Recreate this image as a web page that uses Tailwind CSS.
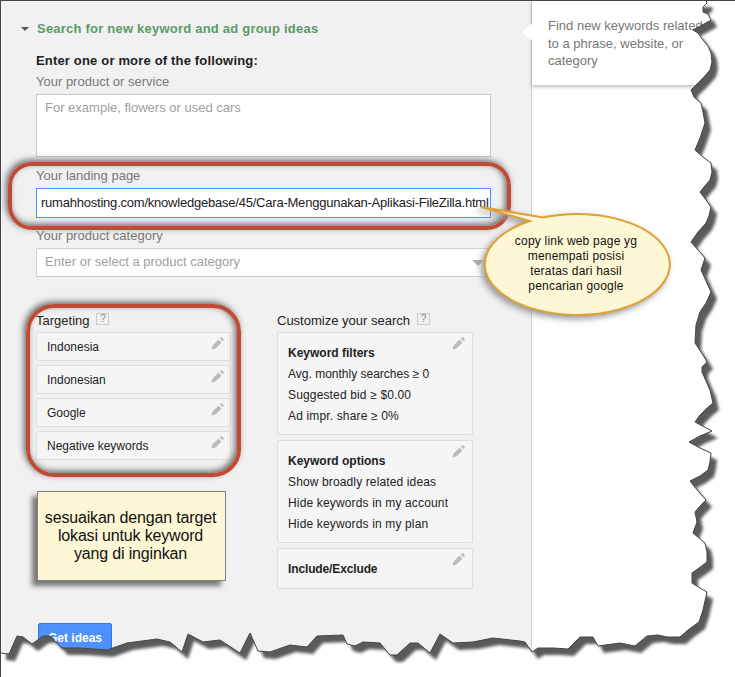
<!DOCTYPE html>
<html lang="en">
  <head>
    <meta charset="UTF-8" />
    <title>Search for new keyword and ad group ideas</title>
    <script src="https://cdn.jsdelivr.net/npm/@tailwindcss/browser@4"></script>
  </head>
  <body class="bg-white">
    <div class="relative w-[735px] h-[677px] overflow-hidden flex border-t border-l border-[#444444] font-['Liberation_Sans',Arial,sans-serif] text-[13px] leading-[16px]">
      <!-- Left panel -->
      <div class="w-[531px] h-[676px] shrink-0 bg-[#f1f1f1] border-r border-[#cccccc] pt-[20px] pl-[35px]">
        <div class="flex items-center h-[16px] -ml-[15px]">
          <span class="w-0 h-0 border-x-[4px] border-x-transparent border-t-[4px] border-t-[#555555]"></span>
          <h2 class="ml-[8px] font-bold text-[#5a9a68] tracking-[0.22px]">Search for new keyword and ad group ideas</h2>
        </div>
        <p class="mt-[16px] font-bold text-[#222222] tracking-[0.17px]">Enter one or more of the following:</p>
        <p class="mt-[5px] text-[#777777]">Your product or service</p>
        <div class="mt-[4px] w-[455px] h-[63px] bg-white border border-[#c8c8c8] pl-[8px] pt-[5px] text-[#a0a0a0]">For example, flowers or used cars</div>
        <p class="mt-[11px] text-[#777777]">Your landing page</p>
        <div class="mt-[4px] w-[455px] h-[30px] bg-white border border-[#4d90fe] pl-[4px] flex items-center text-[#222222] tracking-[-0.22px] whitespace-nowrap">rumahhosting.com/knowledgebase/45/Cara-Menggunakan-Aplikasi-FileZilla.html</div>
        <p class="mt-[10px] text-[#777777]">Your product category</p>
        <div class="relative mt-[4px] w-[455px] h-[29px] bg-white border border-[#d0d0d0] pl-[8px] pb-[2px] flex items-center text-[#a0a0a0]">
          Enter or select a product category
          <span class="absolute right-[6px] top-[11px] w-0 h-0 border-x-[6px] border-x-transparent border-t-[6px] border-t-[#aaaaaa]"></span>
        </div>

        <div class="flex mt-[35px]">
          <!-- Targeting -->
          <div class="w-[195px]">
            <div class="flex items-start h-[20px] pt-[1px] text-[#222222]">
              Targeting
              <span class="ml-[7px] w-[13px] h-[12px] border border-[#cccccc] text-[#888888] text-[10px] leading-[10px] text-center">?</span>
            </div>
            <div class="flex flex-col gap-[4px] text-[12px] text-[#222222]">
              <div class="relative h-[29px] bg-[#f5f5f5] border border-[#dddddd] rounded-[2px] pl-[10px] flex items-center">
                Indonesia
                <svg class="absolute right-[6px] top-[4px]" width="13" height="13" viewBox="0 0 13 13"><path d="M0.5 12.5 L1.5 8.5 L7.5 2.5 L10.5 5.5 L4.5 11.5 Z M8.7 1.3 L9.8 0.4 Q10.5 0 11.2 0.5 L12.5 1.8 Q13 2.5 12.6 3.2 L11.7 4.3 Z" fill="#bbbbbb"/></svg>
              </div>
              <div class="relative h-[29px] bg-[#f5f5f5] border border-[#dddddd] rounded-[2px] pl-[10px] flex items-center">
                Indonesian
                <svg class="absolute right-[6px] top-[4px]" width="13" height="13" viewBox="0 0 13 13"><path d="M0.5 12.5 L1.5 8.5 L7.5 2.5 L10.5 5.5 L4.5 11.5 Z M8.7 1.3 L9.8 0.4 Q10.5 0 11.2 0.5 L12.5 1.8 Q13 2.5 12.6 3.2 L11.7 4.3 Z" fill="#bbbbbb"/></svg>
              </div>
              <div class="relative h-[29px] bg-[#f5f5f5] border border-[#dddddd] rounded-[2px] pl-[10px] flex items-center">
                Google
                <svg class="absolute right-[6px] top-[4px]" width="13" height="13" viewBox="0 0 13 13"><path d="M0.5 12.5 L1.5 8.5 L7.5 2.5 L10.5 5.5 L4.5 11.5 Z M8.7 1.3 L9.8 0.4 Q10.5 0 11.2 0.5 L12.5 1.8 Q13 2.5 12.6 3.2 L11.7 4.3 Z" fill="#bbbbbb"/></svg>
              </div>
              <div class="relative h-[29px] bg-[#f5f5f5] border border-[#dddddd] rounded-[2px] pl-[10px] flex items-center">
                Negative keywords
                <svg class="absolute right-[6px] top-[4px]" width="13" height="13" viewBox="0 0 13 13"><path d="M0.5 12.5 L1.5 8.5 L7.5 2.5 L10.5 5.5 L4.5 11.5 Z M8.7 1.3 L9.8 0.4 Q10.5 0 11.2 0.5 L12.5 1.8 Q13 2.5 12.6 3.2 L11.7 4.3 Z" fill="#bbbbbb"/></svg>
              </div>
            </div>
            <div class="mt-[31px] ml-[1px] w-[189px] h-[90px] bg-[#fef7d6] border border-[#808080] shadow-[-5px_5px_5px_#777777] flex items-center justify-center pr-[2px] text-center text-[16px] leading-[18px] tracking-[-0.17px] text-[#111111]">
              <p>sesuaikan dengan target<br />lokasi untuk keyword<br />yang di inginkan</p>
            </div>
          </div>

          <!-- Customize your search -->
          <div class="ml-[46px] w-[196px]">
            <div class="flex items-start h-[20px] pt-[1px] text-[#222222]">
              Customize your search
              <span class="ml-[7px] w-[13px] h-[12px] border border-[#cccccc] text-[#888888] text-[10px] leading-[10px] text-center">?</span>
            </div>
            <div class="flex flex-col gap-[5px] text-[12px] leading-[21px] text-[#222222]">
              <div class="relative h-[103px] bg-[#f5f5f5] border border-[#dddddd] rounded-[2px] pl-[10px] pt-[10px]">
                <p class="font-bold">Keyword filters</p>
                <p>Avg. monthly searches ≥ 0</p>
                <p class="tracking-[0.15px]">Suggested bid ≥ $0.00</p>
                <p class="tracking-[0.15px]">Ad impr. share ≥ 0%</p>
                <svg class="absolute right-[7px] top-[4px]" width="13" height="13" viewBox="0 0 13 13"><path d="M0.5 12.5 L1.5 8.5 L7.5 2.5 L10.5 5.5 L4.5 11.5 Z M8.7 1.3 L9.8 0.4 Q10.5 0 11.2 0.5 L12.5 1.8 Q13 2.5 12.6 3.2 L11.7 4.3 Z" fill="#bbbbbb"/></svg>
              </div>
              <div class="relative h-[103px] bg-[#f5f5f5] border border-[#dddddd] rounded-[2px] pl-[10px] pt-[10px]">
                <p class="font-bold">Keyword options</p>
                <p class="tracking-[0.13px]">Show broadly related ideas</p>
                <p class="tracking-[0.15px]">Hide keywords in my account</p>
                <p class="tracking-[0.15px]">Hide keywords in my plan</p>
                <svg class="absolute right-[7px] top-[4px]" width="13" height="13" viewBox="0 0 13 13"><path d="M0.5 12.5 L1.5 8.5 L7.5 2.5 L10.5 5.5 L4.5 11.5 Z M8.7 1.3 L9.8 0.4 Q10.5 0 11.2 0.5 L12.5 1.8 Q13 2.5 12.6 3.2 L11.7 4.3 Z" fill="#bbbbbb"/></svg>
              </div>
              <div class="relative h-[41px] bg-[#f5f5f5] border border-[#dddddd] rounded-[2px] pl-[10px] pt-[10px]">
                <p class="font-bold tracking-[-0.13px]">Include/Exclude</p>
                <svg class="absolute right-[7px] top-[4px]" width="13" height="13" viewBox="0 0 13 13"><path d="M0.5 12.5 L1.5 8.5 L7.5 2.5 L10.5 5.5 L4.5 11.5 Z M8.7 1.3 L9.8 0.4 Q10.5 0 11.2 0.5 L12.5 1.8 Q13 2.5 12.6 3.2 L11.7 4.3 Z" fill="#bbbbbb"/></svg>
              </div>
            </div>
          </div>
        </div>

        <button class="mt-[34px] ml-[2px] w-[74px] h-[29px] bg-[#4d90fe] border border-[#3079ed] rounded-[2px] text-white font-bold text-[12px]">Get ideas</button>
      </div>

      <!-- Right panel -->
      <div class="flex-1">
        <div class="relative h-[84px] bg-white shadow-[0_2px_4px_rgba(0,0,0,0.25)] pl-[16px] pt-[16px] leading-[17.5px] text-[#777777] whitespace-nowrap">
          <span class="absolute -left-[7px] top-[25px] w-[12px] h-[12px] bg-white rotate-45"></span>
          <p class="relative">Find new keywords related<br />to a phrase, website, or<br />category</p>
        </div>
      </div>

      <!-- Red highlight rings -->
      <div class="absolute left-[7px] top-[161px] w-[503px] h-[68px] rounded-[24px] border-4 border-[#c04a32] shadow-[-2px_-2px_6px_#666666,inset_-2px_-2px_6px_#666666]"></div>
      <div class="absolute left-[25px] top-[303px] w-[215px] h-[173px] rounded-[28px] border-4 border-[#c04a32] shadow-[-2px_-2px_6px_#666666,inset_-2px_-2px_6px_#666666]"></div>

      <!-- Torn paper edge and callout -->
      <svg class="absolute -left-px -top-px" width="735" height="677" viewBox="0 0 735 677">
        <defs>
          <filter id="blur" x="-5%" y="-5%" width="110%" height="110%"><feGaussianBlur stdDeviation="1.6" /></filter>
          <clipPath id="outside">
            <path d="M706 0 707 3 703 7 703 12 708 14 711 20 704 24 693 30 698 33 703 40 708 46 711 53 712 62 710 70 703 78 697 84 691 90 694 97 701 103 703 112 705 123 700 138 695 150 703 157 711 163 712 172 710 180 704 187 700 192 706 200 711 207 709 216 706 223 698 232 691 242 698 250 705 258 703 264 701 270 706 281 711 292 706 303 700 312 696 325 695 343 703 355 707 362 702 367 702 372 706 381 710 390 713 403 706 409 700 415 695 422 712 431 700 436 689 442 700 448 711 453 710 462 708 470 700 476 690 481 698 491 706 500 700 506 695 512 697 522 693 533 699 538 705 543 707 552 707 562 699 568 692 573 692 583 700 588 707 592 705 601 703 610 699 622 688 630 680 637 667 637 658 635 647 636 635 646 620 643 598 646 593 637 580 637 568 649 553 648 538 648 532 652 525 642 520 641 493 638 473 642 453 643 440 634 430 653 418 643 410 643 397 655 390 655 380 643 363 642 355 646 347 644 343 635 317 636 307 647 290 645 270 652 258 651 250 633 240 653 220 640 203 642 188 634 182 652 170 642 157 639 127 643 107 650 80 648 62 648 50 636 43 636 32 644 23 637 17 636 9 654 0 653 0 677 735 677 735 0Z" />
          </clipPath>
        </defs>
        <path fill="#ffffff" d="M706 0 707 3 703 7 703 12 708 14 711 20 704 24 693 30 698 33 703 40 708 46 711 53 712 62 710 70 703 78 697 84 691 90 694 97 701 103 703 112 705 123 700 138 695 150 703 157 711 163 712 172 710 180 704 187 700 192 706 200 711 207 709 216 706 223 698 232 691 242 698 250 705 258 703 264 701 270 706 281 711 292 706 303 700 312 696 325 695 343 703 355 707 362 702 367 702 372 706 381 710 390 713 403 706 409 700 415 695 422 712 431 700 436 689 442 700 448 711 453 710 462 708 470 700 476 690 481 698 491 706 500 700 506 695 512 697 522 693 533 699 538 705 543 707 552 707 562 699 568 692 573 692 583 700 588 707 592 705 601 703 610 699 622 688 630 680 637 667 637 658 635 647 636 635 646 620 643 598 646 593 637 580 637 568 649 553 648 538 648 532 652 525 642 520 641 493 638 473 642 453 643 440 634 430 653 418 643 410 643 397 655 390 655 380 643 363 642 355 646 347 644 343 635 317 636 307 647 290 645 270 652 258 651 250 633 240 653 220 640 203 642 188 634 182 652 170 642 157 639 127 643 107 650 80 648 62 648 50 636 43 636 32 644 23 637 17 636 9 654 0 653 0 677 735 677 735 0Z" />
        <g clip-path="url(#outside)">
          <path fill="#5a5a5a" filter="url(#blur)" transform="translate(6 7)" d="M0 0 706 0 707 3 703 7 703 12 708 14 711 20 704 24 693 30 698 33 703 40 708 46 711 53 712 62 710 70 703 78 697 84 691 90 694 97 701 103 703 112 705 123 700 138 695 150 703 157 711 163 712 172 710 180 704 187 700 192 706 200 711 207 709 216 706 223 698 232 691 242 698 250 705 258 703 264 701 270 706 281 711 292 706 303 700 312 696 325 695 343 703 355 707 362 702 367 702 372 706 381 710 390 713 403 706 409 700 415 695 422 712 431 700 436 689 442 700 448 711 453 710 462 708 470 700 476 690 481 698 491 706 500 700 506 695 512 697 522 693 533 699 538 705 543 707 552 707 562 699 568 692 573 692 583 700 588 707 592 705 601 703 610 699 622 688 630 680 637 667 637 658 635 647 636 635 646 620 643 598 646 593 637 580 637 568 649 553 648 538 648 532 652 525 642 520 641 493 638 473 642 453 643 440 634 430 653 418 643 410 643 397 655 390 655 380 643 363 642 355 646 347 644 343 635 317 636 307 647 290 645 270 652 258 651 250 633 240 653 220 640 203 642 188 634 182 652 170 642 157 639 127 643 107 650 80 648 62 648 50 636 43 636 32 644 23 637 17 636 9 654 0 653Z" />
        </g>
        <path fill="none" stroke="#444444" stroke-width="1" d="M0 0.5 706 0.5 707 3 703 7 703 12 708 14 711 20 704 24 693 30 698 33 703 40 708 46 711 53 712 62 710 70 703 78 697 84 691 90 694 97 701 103 703 112 705 123 700 138 695 150 703 157 711 163 712 172 710 180 704 187 700 192 706 200 711 207 709 216 706 223 698 232 691 242 698 250 705 258 703 264 701 270 706 281 711 292 706 303 700 312 696 325 695 343 703 355 707 362 702 367 702 372 706 381 710 390 713 403 706 409 700 415 695 422 712 431 700 436 689 442 700 448 711 453 710 462 708 470 700 476 690 481 698 491 706 500 700 506 695 512 697 522 693 533 699 538 705 543 707 552 707 562 699 568 692 573 692 583 700 588 707 592 705 601 703 610 699 622 688 630 680 637 667 637 658 635 647 636 635 646 620 643 598 646 593 637 580 637 568 649 553 648 538 648 532 652 525 642 520 641 493 638 473 642 453 643 440 634 430 653 418 643 410 643 397 655 390 655 380 643 363 642 355 646 347 644 343 635 317 636 307 647 290 645 270 652 258 651 250 633 240 653 220 640 203 642 188 634 182 652 170 642 157 639 127 643 107 650 80 648 62 648 50 636 43 636 32 644 23 637 17 636 9 654 0 653" />
        <path class="[filter:drop-shadow(-3px_3px_3px_#999999)]" fill="#fef7d6" stroke="#dfa038" stroke-width="2" d="M481 207 543 217.5A92.5 50.5 0 1 1 530 221Z" />
      </svg>
      <p class="absolute left-[505px] top-[233px] w-[140px] text-center text-[12px] leading-[15px] tracking-[0.2px] text-[#111111]">copy link web page yg<br />menempati posisi<br />teratas dari hasil<br />pencarian google</p>
    </div>
  </body>
</html>
